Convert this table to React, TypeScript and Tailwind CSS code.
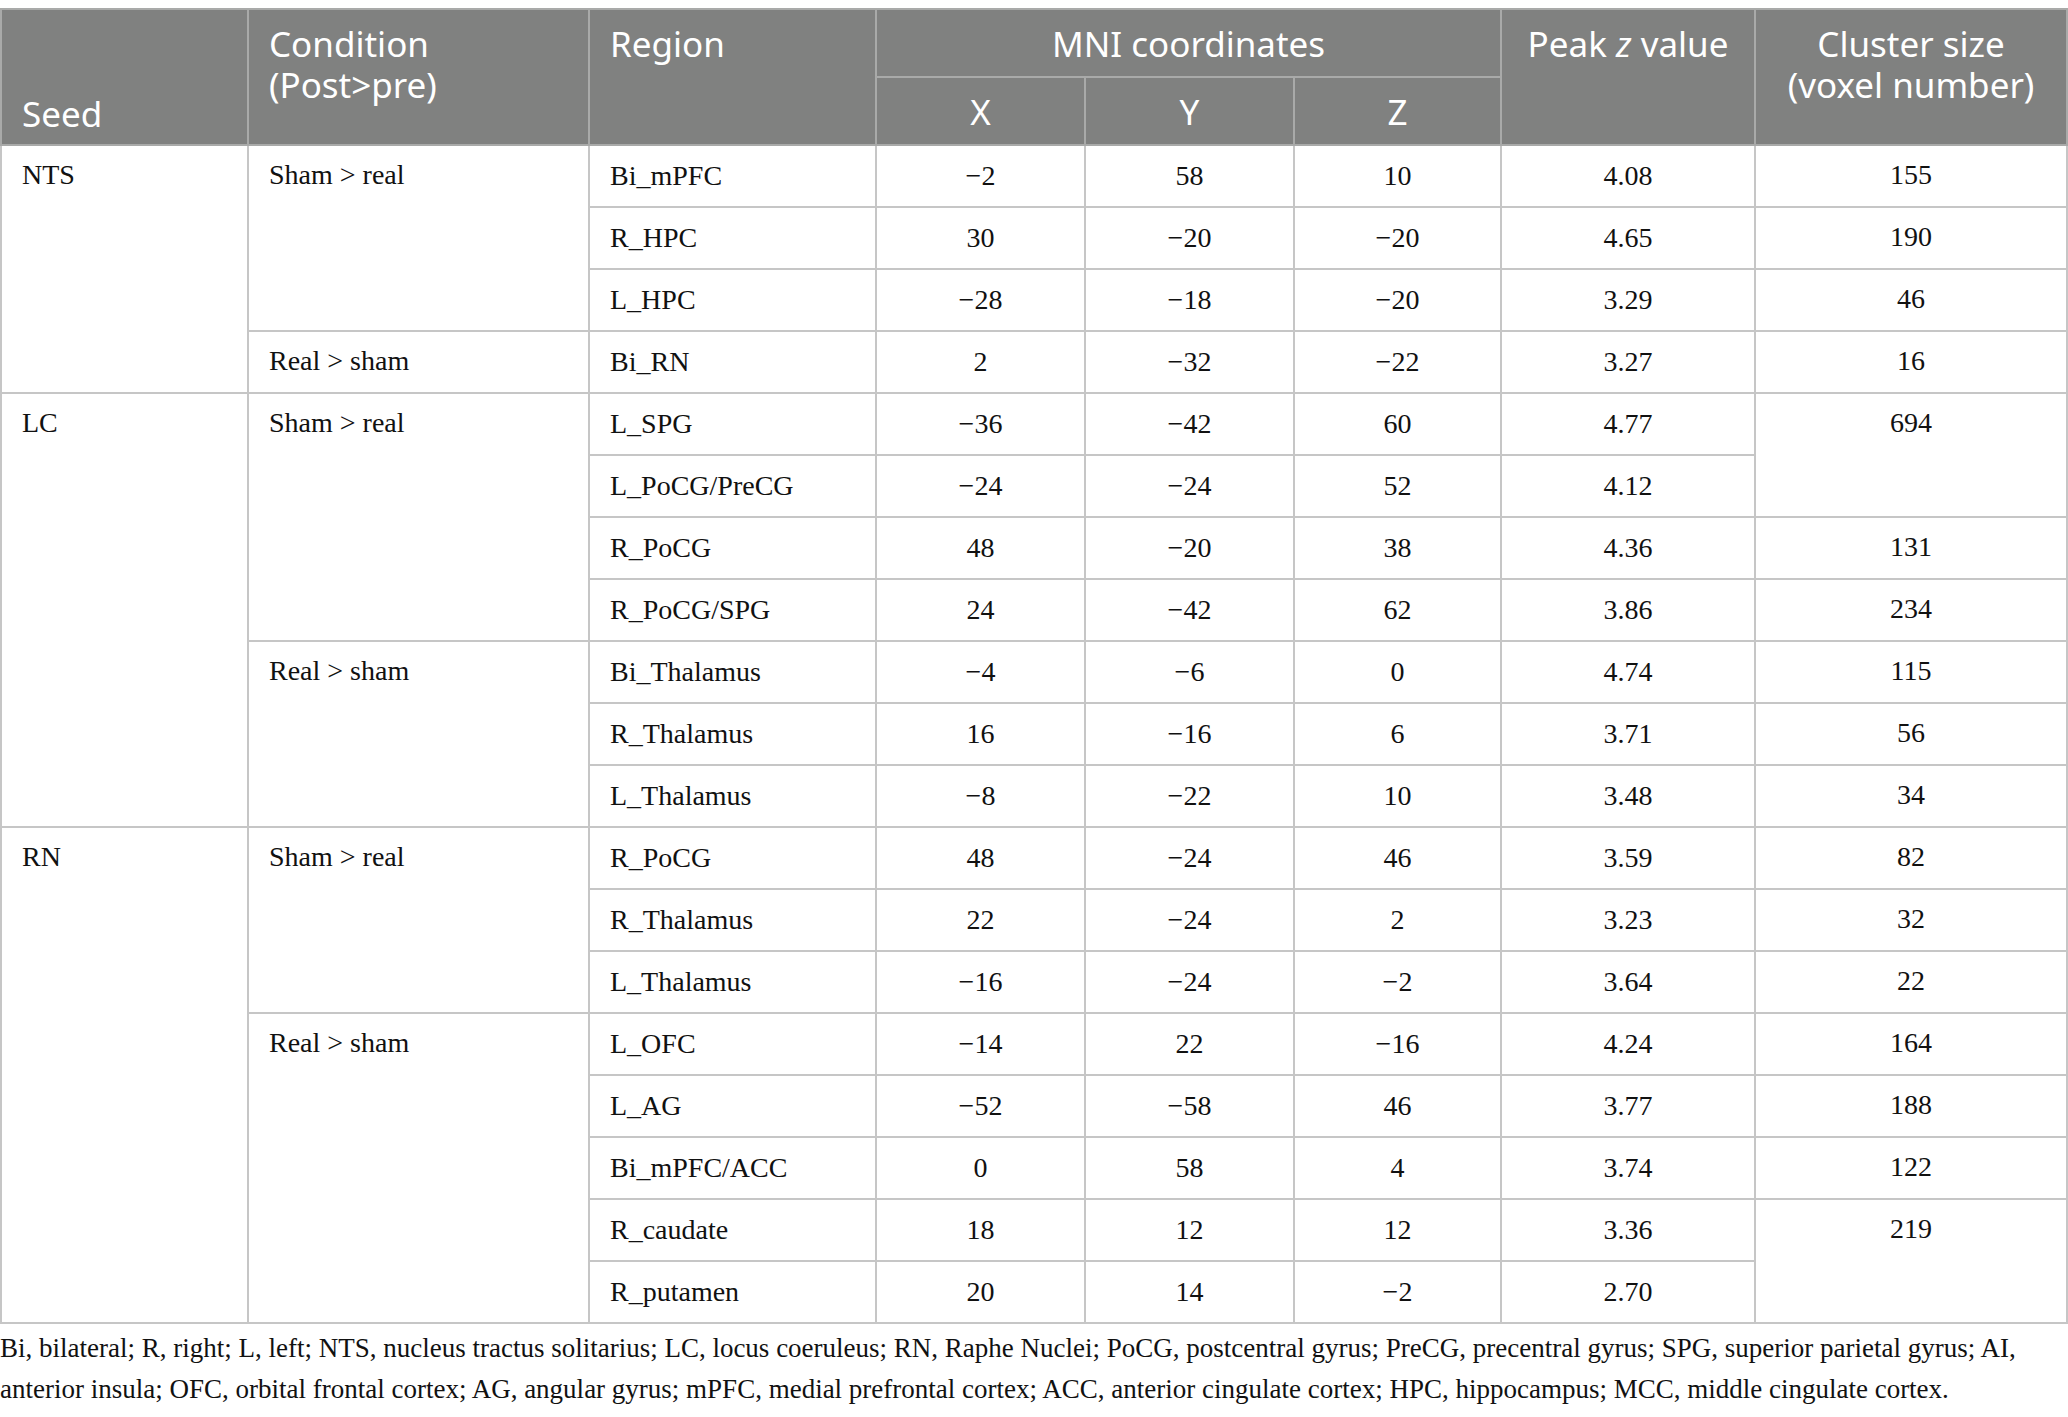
type Row = {
  seed?: { label: string; span: number };
  cond?: { label: string; span: number };
  region: string;
  x: string;
  y: string;
  z: string;
  peak: string;
  cluster?: { label: string; span: number };
};

const rows: Row[] = [
  { seed: { label: "NTS", span: 4 }, cond: { label: "Sham > real", span: 3 }, region: "Bi_mPFC", x: "−2", y: "58", z: "10", peak: "4.08", cluster: { label: "155", span: 1 } },
  { region: "R_HPC", x: "30", y: "−20", z: "−20", peak: "4.65", cluster: { label: "190", span: 1 } },
  { region: "L_HPC", x: "−28", y: "−18", z: "−20", peak: "3.29", cluster: { label: "46", span: 1 } },
  { cond: { label: "Real > sham", span: 1 }, region: "Bi_RN", x: "2", y: "−32", z: "−22", peak: "3.27", cluster: { label: "16", span: 1 } },
  { seed: { label: "LC", span: 7 }, cond: { label: "Sham > real", span: 4 }, region: "L_SPG", x: "−36", y: "−42", z: "60", peak: "4.77", cluster: { label: "694", span: 2 } },
  { region: "L_PoCG/PreCG", x: "−24", y: "−24", z: "52", peak: "4.12" },
  { region: "R_PoCG", x: "48", y: "−20", z: "38", peak: "4.36", cluster: { label: "131", span: 1 } },
  { region: "R_PoCG/SPG", x: "24", y: "−42", z: "62", peak: "3.86", cluster: { label: "234", span: 1 } },
  { cond: { label: "Real > sham", span: 3 }, region: "Bi_Thalamus", x: "−4", y: "−6", z: "0", peak: "4.74", cluster: { label: "115", span: 1 } },
  { region: "R_Thalamus", x: "16", y: "−16", z: "6", peak: "3.71", cluster: { label: "56", span: 1 } },
  { region: "L_Thalamus", x: "−8", y: "−22", z: "10", peak: "3.48", cluster: { label: "34", span: 1 } },
  { seed: { label: "RN", span: 8 }, cond: { label: "Sham > real", span: 3 }, region: "R_PoCG", x: "48", y: "−24", z: "46", peak: "3.59", cluster: { label: "82", span: 1 } },
  { region: "R_Thalamus", x: "22", y: "−24", z: "2", peak: "3.23", cluster: { label: "32", span: 1 } },
  { region: "L_Thalamus", x: "−16", y: "−24", z: "−2", peak: "3.64", cluster: { label: "22", span: 1 } },
  { cond: { label: "Real > sham", span: 5 }, region: "L_OFC", x: "−14", y: "22", z: "−16", peak: "4.24", cluster: { label: "164", span: 1 } },
  { region: "L_AG", x: "−52", y: "−58", z: "46", peak: "3.77", cluster: { label: "188", span: 1 } },
  { region: "Bi_mPFC/ACC", x: "0", y: "58", z: "4", peak: "3.74", cluster: { label: "122", span: 1 } },
  { region: "R_caudate", x: "18", y: "12", z: "12", peak: "3.36", cluster: { label: "219", span: 2 } },
  { region: "R_putamen", x: "20", y: "14", z: "−2", peak: "2.70" },
];

const head = "border-2 border-[#a9aaa9] font-['Noto_Sans',sans-serif] text-[35px] leading-[41px] font-normal text-white";
const cell = "border-2 border-[#c6c6c6] h-[62px] px-5 text-[28px] leading-[32px] text-[#111]";
const tall = "align-top pt-[13px]";

export default function App() {
  return (
    <div className="w-[2068px] bg-white pt-[8px] font-['Liberation_Serif',serif]">
      <table className="w-full table-fixed border-collapse">
        <colgroup>
          <col className="w-[247px]" />
          <col className="w-[341px]" />
          <col className="w-[287px]" />
          <col className="w-[209px]" />
          <col className="w-[209px]" />
          <col className="w-[207px]" />
          <col className="w-[254px]" />
          <col />
        </colgroup>
        <thead className="bg-[#808180]">
          <tr className="h-[68px]">
            <th rowSpan={2} className={`${head} px-5 pb-[10px] text-left align-bottom`}>Seed</th>
            <th rowSpan={2} className={`${head} px-5 pt-[13px] text-left align-top`}>Condition<br />(Post&gt;pre)</th>
            <th rowSpan={2} className={`${head} px-5 pt-[13px] text-left align-top`}>Region</th>
            <th colSpan={3} className={`${head} text-center align-middle`}>MNI coordinates</th>
            <th rowSpan={2} className={`${head} pt-[13px] text-center align-top`}>Peak <i>z</i> value</th>
            <th rowSpan={2} className={`${head} pt-[13px] text-center align-top`}>Cluster size<br />(voxel number)</th>
          </tr>
          <tr className="h-[68px]">
            <th className={`${head} text-center align-middle`}>X</th>
            <th className={`${head} text-center align-middle`}>Y</th>
            <th className={`${head} text-center align-middle`}>Z</th>
          </tr>
        </thead>
        <tbody>
          {rows.map((r, i) => (
            <tr key={i}>
              {r.seed && (
                <td rowSpan={r.seed.span} className={`${cell} ${tall} text-left`}>{r.seed.label}</td>
              )}
              {r.cond && (
                <td rowSpan={r.cond.span} className={`${cell} ${tall} text-left`}>{r.cond.label}</td>
              )}
              <td className={`${cell} text-left align-middle`}>{r.region}</td>
              <td className={`${cell} text-center align-middle`}>{r.x}</td>
              <td className={`${cell} text-center align-middle`}>{r.y}</td>
              <td className={`${cell} text-center align-middle`}>{r.z}</td>
              <td className={`${cell} text-center align-middle`}>{r.peak}</td>
              {r.cluster && (
                <td rowSpan={r.cluster.span} className={`${cell} ${tall} text-center`}>{r.cluster.label}</td>
              )}
            </tr>
          ))}
        </tbody>
      </table>
      <p className="mt-[4px] text-[27px] leading-[41px] text-[#111]">
        Bi, bilateral; R, right; L, left; NTS, nucleus tractus solitarius; LC, locus coeruleus; RN, Raphe Nuclei; PoCG, postcentral gyrus; PreCG, precentral gyrus; SPG, superior parietal gyrus; AI, anterior insula; OFC, orbital frontal cortex; AG, angular gyrus; mPFC, medial prefrontal cortex; ACC, anterior cingulate cortex; HPC, hippocampus; MCC, middle cingulate cortex.
      </p>
    </div>
  );
}
